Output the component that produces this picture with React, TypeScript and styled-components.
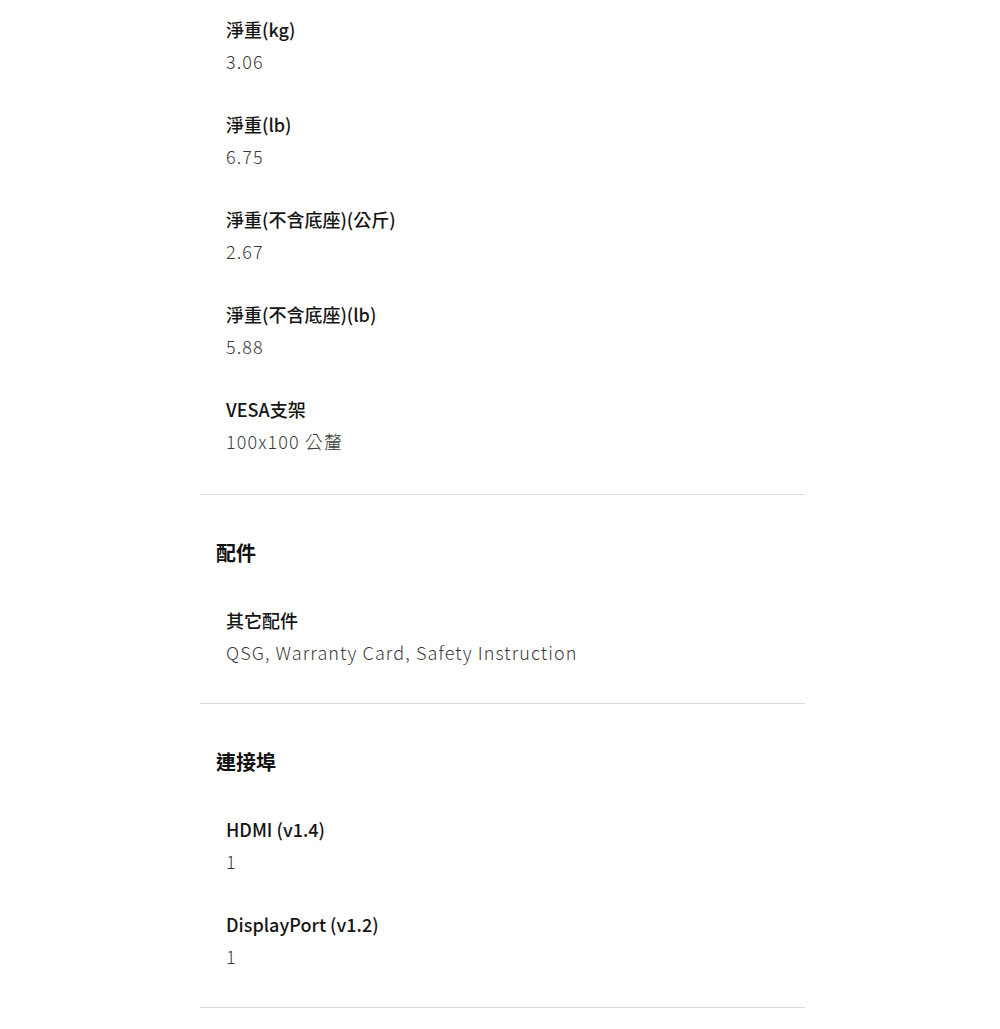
import React from "react";
import styled, { createGlobalStyle } from "styled-components";

const Global = createGlobalStyle`
  html, body { margin: 0; padding: 0; background: #fff; }
  body { font-family: "Noto Sans CJK TC", "Noto Sans", sans-serif; color: #1a1a1a; }
`;

const Page = styled.div`
  width: 605px;
  margin-left: 200px;
  padding-top: 13px;
`;

const Section = styled.section<{ $first?: boolean }>`
  border-top: ${(p) => (p.$first ? "none" : "1px solid #dcdcdc")};
  padding: ${(p) => (p.$first ? "0 0 37px" : "43px 0 35px")};
  display: flex;
  flex-direction: column;
`;

const Heading = styled.h2`
  margin: 0 0 36px;
  padding-left: 16px;
  font-size: 20px;
  line-height: 30px;
  font-weight: 700;
  color: #111;
`;

const List = styled.dl`
  margin: 0;
  padding-left: 26px;
  display: flex;
  flex-direction: column;
  gap: 31px;
`;

const Item = styled.div`
  display: flex;
  flex-direction: column;
`;

const Label = styled.dt`
  font-size: 18px;
  line-height: 32px;
  font-weight: 500;
  color: #151515;
`;

const Value = styled.dd`
  margin: 0;
  font-size: 18px;
  line-height: 32px;
  font-weight: 300;
  color: #3a3a3a;
  letter-spacing: 1.1px;
`;

type Spec = { label: string; value: string };

const sections: { title?: string; items: Spec[] }[] = [
  {
    items: [
      { label: "淨重(kg)", value: "3.06" },
      { label: "淨重(lb)", value: "6.75" },
      { label: "淨重(不含底座)(公斤)", value: "2.67" },
      { label: "淨重(不含底座)(lb)", value: "5.88" },
      { label: "VESA支架", value: "100x100 公釐" },
    ],
  },
  {
    title: "配件",
    items: [{ label: "其它配件", value: "QSG, Warranty Card, Safety Instruction" }],
  },
  {
    title: "連接埠",
    items: [
      { label: "HDMI (v1.4)", value: "1" },
      { label: "DisplayPort (v1.2)", value: "1" },
    ],
  },
];

export default function App() {
  return (
    <>
      <Global />
      <Page>
        {sections.map((s, i) => (
          <Section key={i} $first={i === 0}>
            {s.title && <Heading>{s.title}</Heading>}
            <List>
              {s.items.map((it) => (
                <Item key={it.label}>
                  <Label>{it.label}</Label>
                  <Value>{it.value}</Value>
                </Item>
              ))}
            </List>
          </Section>
        ))}
        <Section />
      </Page>
    </>
  );
}
